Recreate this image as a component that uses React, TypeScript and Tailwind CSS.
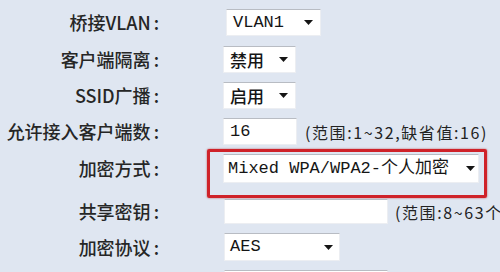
import type { ReactNode } from 'react';

const labelFont = { fontFamily: '"Noto Sans CJK SC", "Noto Sans", sans-serif' };

function Arrow() {
  return (
    <svg width="9" height="5" viewBox="0 0 9 5" className="shrink-0">
      <path d="M0 0h9L4.5 5z" fill="#151515" />
    </svg>
  );
}

// white field with the grey top edge of the old router pages
function Field({ className, children }: { className: string; children?: ReactNode }) {
  return (
    <div
      className={`flex shrink-0 items-center bg-white border border-[#eceef2] border-t-[#b8bcc3] text-[17px] text-[#151515] font-['Liberation_Mono','Noto_Sans_CJK_SC',monospace] ${className}`}
    >
      {children}
    </div>
  );
}

function Label({ text }: { text: string }) {
  return (
    <div className="w-[165px] shrink-0 text-right text-[18px] font-medium text-[#262626] pr-[6px] whitespace-nowrap" style={labelFont}>
      {text}
      {text && <span className="ml-[3px]">:</span>}
    </div>
  );
}

function Hint({ children, className }: { children: ReactNode; className: string }) {
  return (
    <span className={`whitespace-nowrap text-[16px] tracking-[1.6px] text-[#222] ${className}`} style={labelFont}>
      {children}
    </span>
  );
}

export default function App() {
  return (
    <div className="w-[500px] h-[272px] overflow-hidden bg-[#dfe6f1] pt-[9px] flex flex-col">
      {/* 桥接VLAN */}
      <div className="flex items-center h-[27px]">
        <Label text="桥接VLAN" />
        <Field className="ml-[61px] w-[95px] h-[27px] pl-[6px] pr-[7px] justify-between">
          <span>VLAN1</span>
          <Arrow />
        </Field>
      </div>

      {/* 客户端隔离 */}
      <div className="flex items-center h-[27px] mt-[10px]">
        <Label text="客户端隔离" />
        <Field className="ml-[58px] w-[73px] h-[27px] pl-[6px] pr-[7px] justify-between">
          <span style={labelFont} className="font-medium">禁用</span>
          <Arrow />
        </Field>
      </div>

      {/* SSID广播 */}
      <div className="flex items-center h-[27px] mt-[9px]">
        <Label text="SSID广播" />
        <Field className="ml-[58px] w-[73px] h-[27px] pl-[6px] pr-[7px] justify-between">
          <span style={labelFont} className="font-medium">启用</span>
          <Arrow />
        </Field>
      </div>

      {/* 允许接入客户端数 */}
      <div className="flex items-center h-[27px] mt-[9px]">
        <Label text="允许接入客户端数" />
        <Field className="ml-[58px] w-[74px] h-[27px] pl-[6px]">
          <span>16</span>
        </Field>
        <Hint className="ml-[8px]">(范围:1~32,缺省值:16)</Hint>
      </div>

      {/* 加密方式 */}
      <div className="flex items-start mt-[4px]">
        <div className="h-[29px] mt-[5px] flex items-center">
          <Label text="加密方式" />
        </div>
        <div className="ml-[42px] w-[280px] h-[49px] shrink-0 border-[3px] border-[#cf2229] rounded-[2px] shadow-[0_0_2px_rgba(170,20,20,0.7)] pl-[13px] pt-[2px]">
          <Field className="w-[256px] h-[29px] pl-[4px] pr-[3px] justify-between">
            <span className="whitespace-nowrap">Mixed WPA/WPA2-个人加密</span>
            <Arrow />
          </Field>
        </div>
      </div>

      {/* 共享密钥 */}
      <div className="flex items-center h-[25px] mt-[1px]">
        <Label text="共享密钥" />
        <Field className="ml-[59px] w-[164px] h-[25px]" />
        <Hint className="ml-[7px]">(范围:8~63个字符)</Hint>
      </div>

      {/* 加密协议 */}
      <div className="flex items-center h-[28px] mt-[9px]">
        <Label text="加密协议" />
        <Field className="ml-[59px] w-[116px] h-[28px] pl-[5px] pr-[6px] justify-between">
          <span>AES</span>
          <Arrow />
        </Field>
      </div>

      <div className="flex items-center h-[25px] mt-[9px]">
        <Label text="" />
        <Field className="ml-[59px] w-[164px] h-[25px]" />
      </div>
    </div>
  );
}
